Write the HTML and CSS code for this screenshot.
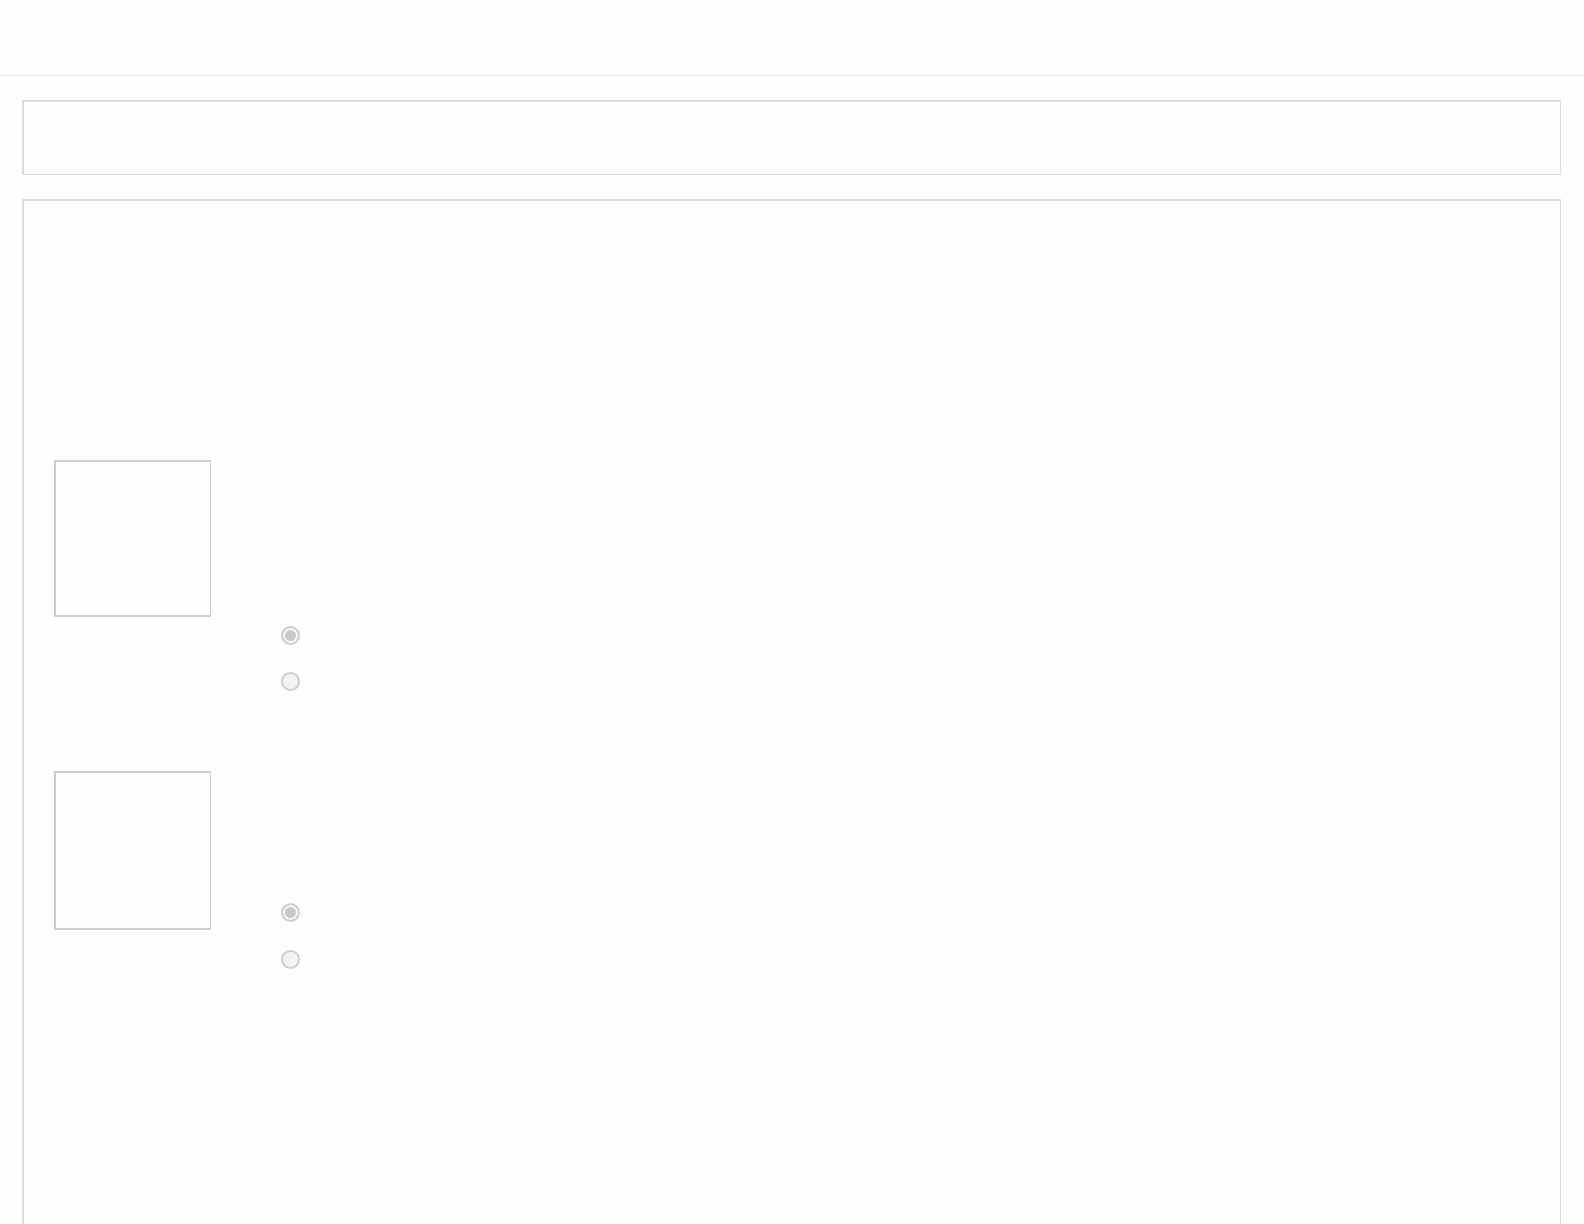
FILE: index.html
```html
<!DOCTYPE html>
<html lang="en">
<head>
    <meta charset="UTF-8">
    <meta name="viewport" content="width=device-width, initial-scale=1.0">
    <title>Quiz</title>
    <link rel="stylesheet" href="styles.css">
</head>
<body>
    <header class="topbar"></header>
    <main class="page">
        <div class="panel intro"></div>
        <div class="panel questions">
            <div class="question q1">
                <div class="thumb"></div>
                <div class="options">
                    <label class="option"><input type="radio" name="q1" checked disabled></label>
                    <label class="option"><input type="radio" name="q1" disabled></label>
                </div>
            </div>
            <div class="question q2">
                <div class="thumb"></div>
                <div class="options">
                    <label class="option"><input type="radio" name="q2" checked disabled></label>
                    <label class="option"><input type="radio" name="q2" disabled></label>
                </div>
            </div>
        </div>
    </main>
</body>
</html>
```

FILE: styles.css
```css
body {
    margin: 0;
    font-family: "Open Sans", Arial, sans-serif;
    background-color: #fefefe;
    overflow: hidden;
}
.topbar {
    height: 75px;
    border-bottom: 1px solid #e4e4e4;
}
.page {
    padding: 24px 23px 0 22px;
}
.panel {
    border: 1px solid #dcdcdc;
    border-top-width: 2px;
    border-left-width: 2px;
    box-sizing: border-box;
}
.intro {
    height: 75px;
    margin-bottom: 24px;
}
.questions {
    min-height: 1100px;
    padding: 259px 30px 0;
}
.question {
    display: flex;
    align-items: flex-start;
}
.q1 {
    margin-bottom: 80px;
}
.thumb {
    width: 157px;
    height: 157px;
    box-sizing: border-box;
    border: 1px solid #c9ced6;
    border-top-width: 2px;
    border-left-width: 2px;
    border-bottom-width: 2px;
    flex-shrink: 0;
}
.q2 .thumb {
    height: 159px;
}
.options {
    margin-left: 70px;
    display: flex;
    flex-direction: column;
    gap: 27px;
}
.q1 .options {
    padding-top: 166px;
}
.q2 .options {
    padding-top: 132px;
    gap: 28px;
}
.option {
    display: block;
    height: 19px;
}
.option input {
    appearance: none;
    -webkit-appearance: none;
    margin: 0;
    width: 19px;
    height: 19px;
    border-radius: 50%;
    border: 2px solid #cfcfcf;
    background: #f3f3f3;
    box-sizing: border-box;
    display: block;
}
.option input:checked {
    background: #c8c8c8;
    box-shadow: inset 0 0 0 2px #fafafa;
}
```
